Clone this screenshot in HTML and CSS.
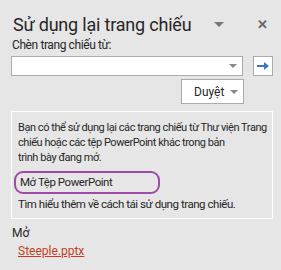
FILE: index.html
```html
<!DOCTYPE html>
<html lang="vi">
<head>
  <meta charset="UTF-8">
  <title>Sử dụng lại trang chiếu</title>
  <link rel="stylesheet" href="styles.css">
</head>
<body>
  <div class="pane">
    <div class="pane-header">
      <h1>Sử dụng lại trang chiếu</h1>
      <span class="menu-arrow"></span>
      <span class="close">&#x2715;</span>
    </div>

    <label class="field-label">Chèn trang chiếu từ:</label>
    <div class="source-row">
      <div class="combo"><span class="caret"></span></div>
      <div class="go-btn">
        <svg width="12" height="10" viewBox="0 0 12 10">
          <path d="M0 4h7V1l5 4-5 4V6H0z" fill="#3c78c0"/>
        </svg>
      </div>
    </div>
    <div class="browse-row">
      <div class="browse">Duyệt <span class="caret"></span></div>
    </div>

    <div class="info">
      <p>Bạn có thể sử dụng lại các trang chiếu từ Thư viện Trang chiếu hoặc các tệp PowerPoint khác trong bản<br>trình bày đang mở.</p>
      <div class="open-file">Mở Tệp PowerPoint</div>
      <p class="learn">Tìm hiểu thêm về cách tái sử dụng trang chiếu.</p>
    </div>

    <div class="recent-title">Mở</div>
    <a class="recent-link" href="#">Steeple.pptx</a>
  </div>
</body>
</html>
```

FILE: styles.css
```css
body {
  margin: 0;
  background-color: #e6e6e6;
  font-family: Roboto, "Liberation Sans", Arial, sans-serif;
  color: #262626;
}
.pane {
  padding: 13px 8px 0 11px;
}
.pane-header {
  display: flex;
  align-items: center;
  height: 22px;
}
h1 {
  margin: 0 0 0 2px;
  font-size: 18px;
  font-weight: normal;
  white-space: nowrap;
  letter-spacing: -0.2px;
  flex: 1;
}
.menu-arrow {
  width: 0;
  height: 0;
  border-left: 5px solid transparent;
  border-right: 5px solid transparent;
  border-top: 5px solid #777;
  margin-right: 33px;
}
.close {
  font-size: 13px;
  color: #666;
  font-weight: bold;
  margin-right: 5px;
}
.field-label {
  display: block;
  font-size: 12px;
  margin: 3px 0 0 1px;
  letter-spacing: -0.4px;
}
.source-row {
  display: flex;
  margin-top: 4px;
}
.combo {
  width: 230px;
  height: 18px;
  background: white;
  border: 1px solid #ababab;
  display: flex;
  align-items: center;
  justify-content: flex-end;
}
.caret {
  display: inline-block;
  width: 0;
  height: 0;
  border-left: 4px solid transparent;
  border-right: 4px solid transparent;
  border-top: 4px solid #888;
  margin-right: 5px;
}
.go-btn {
  width: 18px;
  height: 18px;
  margin-left: 10px;
  background: white;
  border: 1px solid #ababab;
  display: flex;
  align-items: center;
  justify-content: center;
}
.browse-row {
  display: flex;
  padding-left: 170px;
  margin-top: 3px;
}
.browse {
  background: white;
  border: 1px solid #ababab;
  font-size: 12px;
  display: flex;
  align-items: center;
  justify-content: space-between;
  padding-left: 12px;
  box-sizing: border-box;
  width: 63px;
  height: 25px;
}
.info {
  margin-top: 7px;
  border: 1px solid white;
  width: 262px;
  box-sizing: border-box;
  padding: 8px 0 6px 6px;
  font-size: 11px;
  line-height: 15px;
  letter-spacing: -0.45px;
}
.info p {
  margin: 0;
}
.open-file {
  margin: 6px 0 0 -4px;
  width: 146px;
  height: 23px;
  box-sizing: border-box;
  border: 2px solid #a04aa8;
  border-radius: 9px;
  padding-left: 4px;
  line-height: 19px;
  font-size: 11.5px;
}
.learn {
  margin-top: 3px !important;
  white-space: nowrap;
  font-size: 11.5px;
}
.recent-title {
  margin-top: 7px;
  margin-left: 1px;
  font-size: 12px;
}
.recent-link {
  display: inline-block;
  margin: 3px 0 0 7px;
  font-size: 12px;
  color: #c43e1c;
}
```
